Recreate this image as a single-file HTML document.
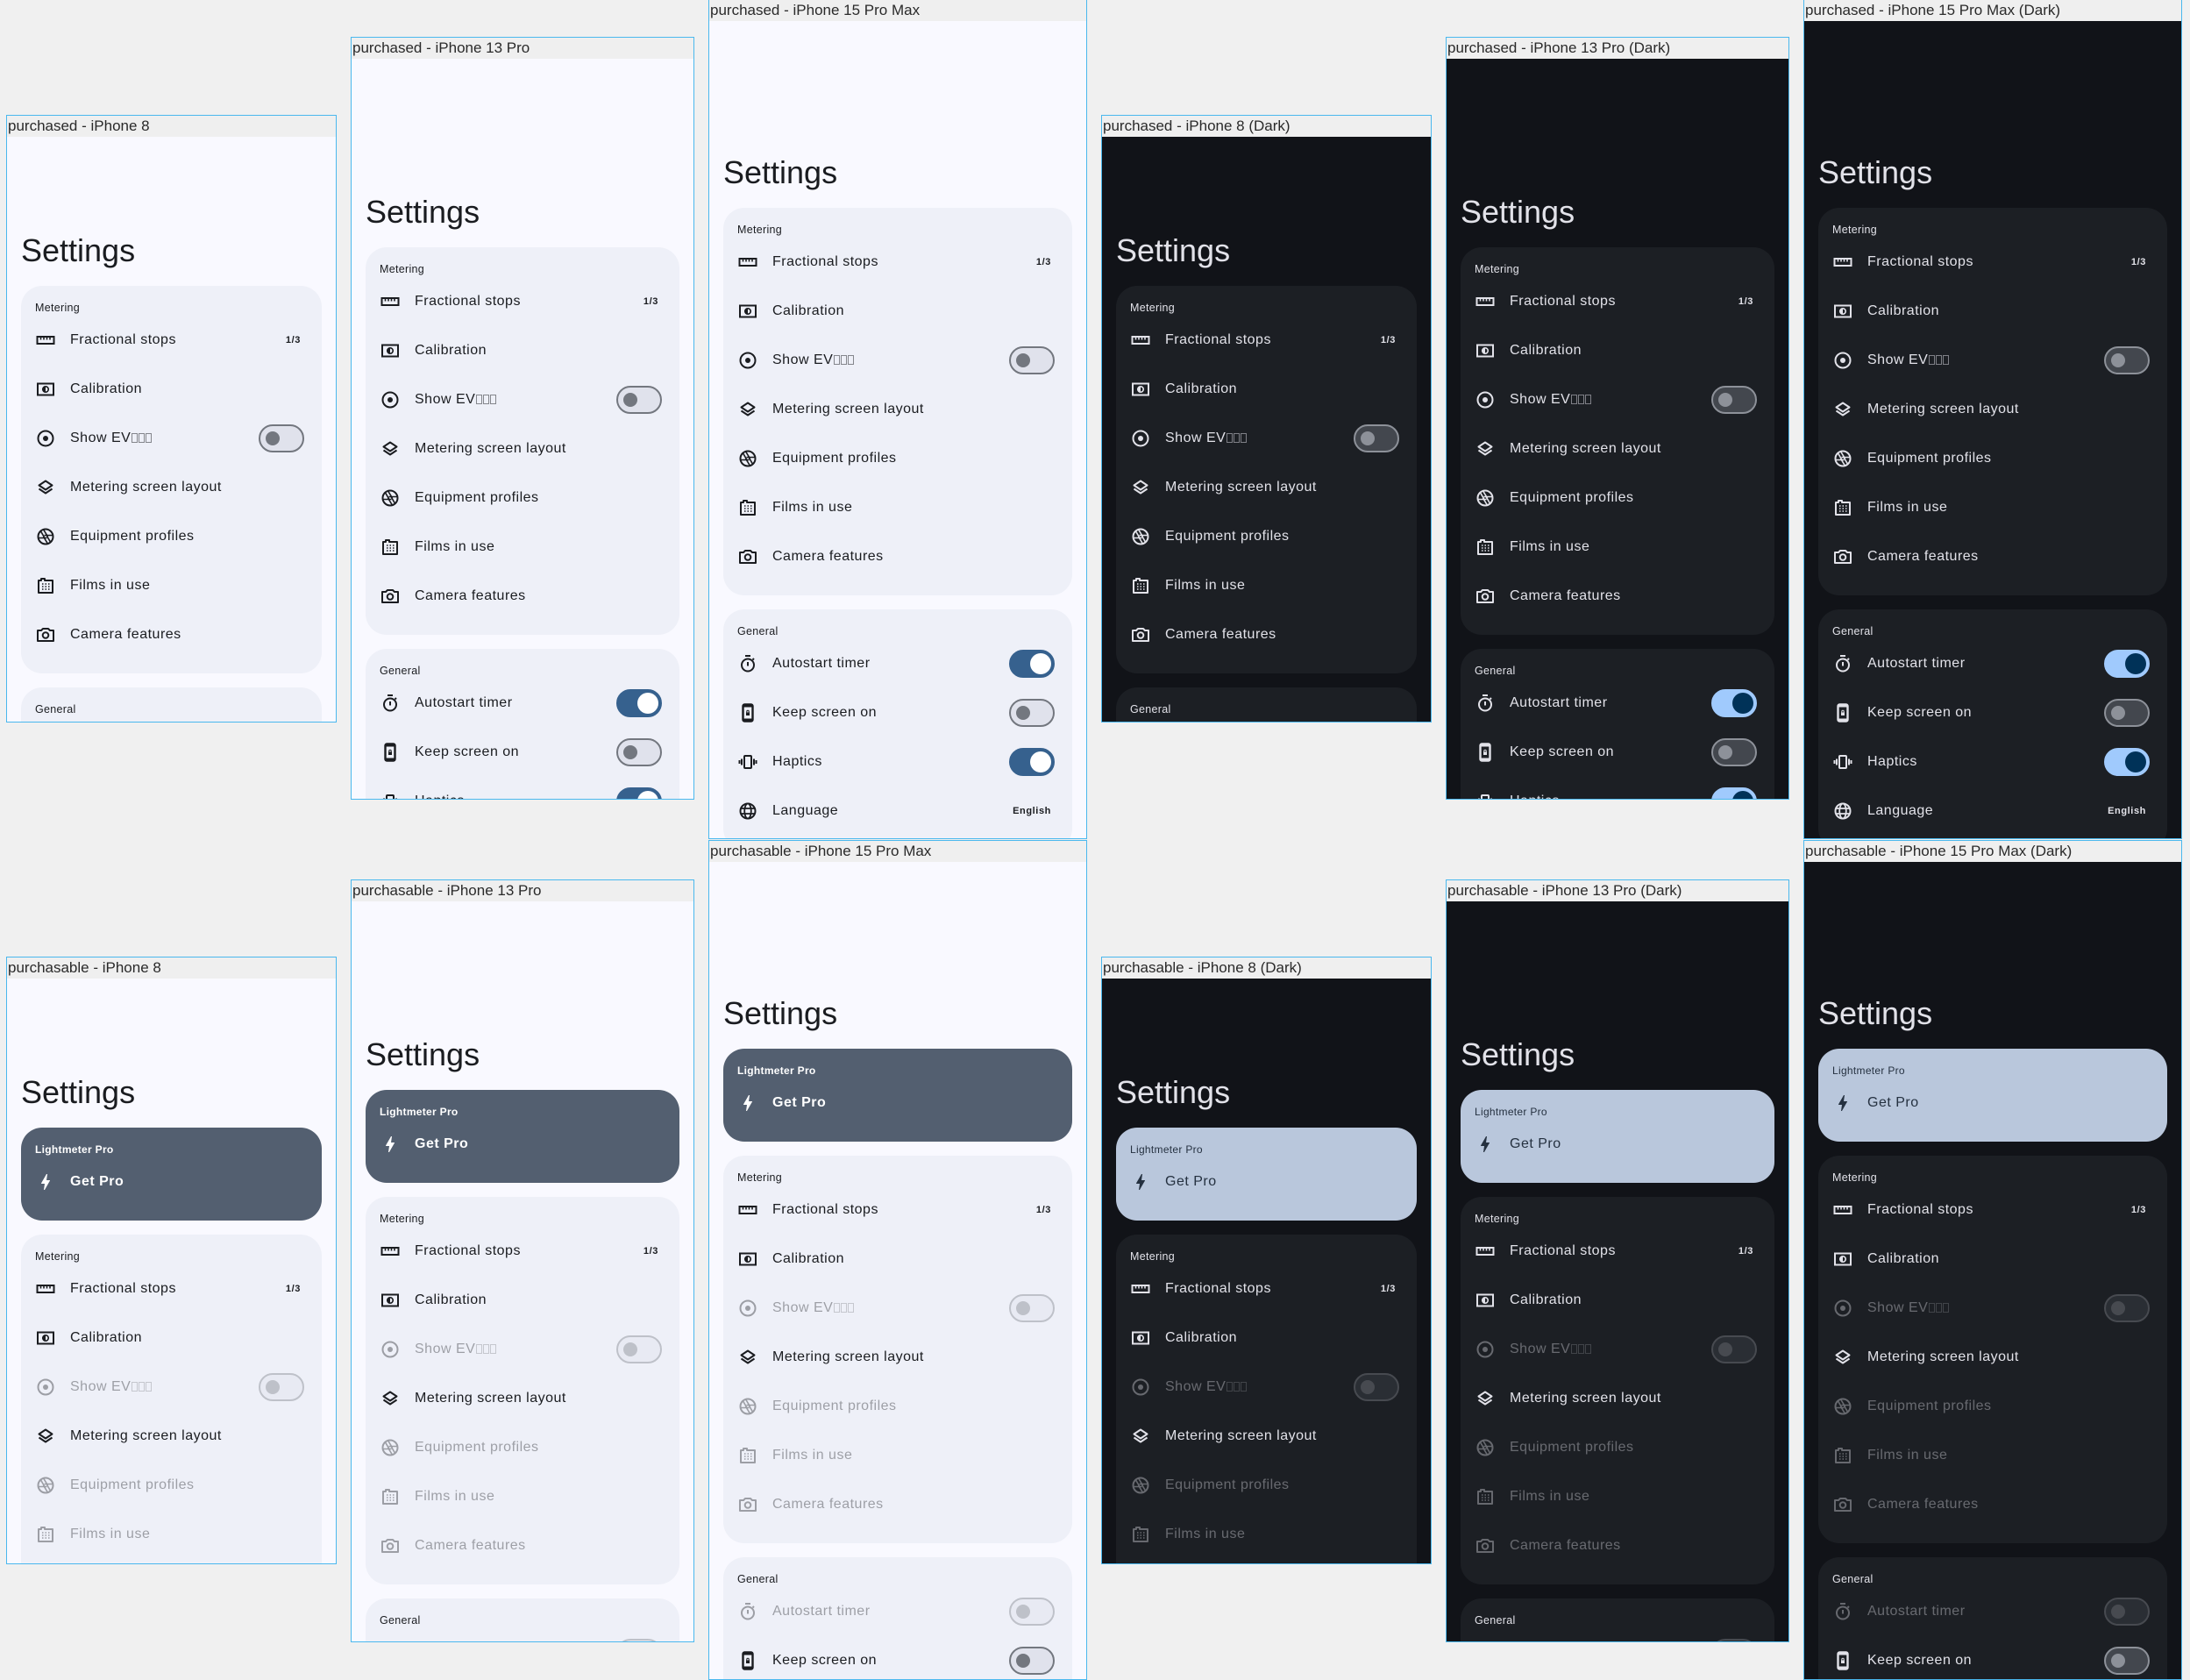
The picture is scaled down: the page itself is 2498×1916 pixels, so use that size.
<!DOCTYPE html>
<html><head><meta charset="utf-8">
<style>
body{margin:0;width:2498px;height:1916px;background:#f0f0f0;position:relative;overflow:hidden;font-family:"Liberation Sans",sans-serif}
.f{position:absolute;outline:1px solid #4ab8ee}
.h{height:24px;background:#efefef;color:#2a2a2a;font-size:17px;line-height:23px;white-space:nowrap;overflow:hidden;padding-left:1px}
.s{position:relative;overflow:hidden;background:#f9f9ff;color:#1a1c20}
.s.d{background:#111318;color:#e2e2e9}
.w8{width:375px}.w8 .s{height:667px}.w8 .ti{margin-top:108px}
.w13{width:390px}.w13 .s{height:844px}.w13 .ti{margin-top:153px}
.w15{width:430px}.w15 .s{height:932px}.w15 .ti{margin-top:151px}
.ti{font-size:36px;line-height:44px;height:44px;padding-left:16px;margin-bottom:18px}
.c{margin:0 16px 16px;border-radius:24px;background:#eef0f8;padding:17px 0 16px}
.d .c{background:#1c1f24}
.l{font-size:12.5px;line-height:17px;padding-left:16px;letter-spacing:.3px}
.r{height:56px;display:flex;align-items:center;padding:0 24px 0 16px;font-size:16px;letter-spacing:.5px;white-space:nowrap}
.r svg{width:24px;height:24px;margin-right:16px;flex:none}
.r span{flex:1}
.r b{font-size:11px;font-weight:bold;letter-spacing:.6px}
.r.x{opacity:.38}
.pc{background:#535f70;color:#fff}
.pc .l{font-weight:bold;font-size:12px}
.pc .r{font-weight:bold}
.d .pc{background:#b9c7dc;color:#253140}
.d .pc .l,.d .pc .r{font-weight:normal}
.sw{width:52px;height:32px;border-radius:16px;box-sizing:border-box;border:2px solid #73777f;background:#e0e2ec;position:relative;flex:none;margin-right:-4px}
.sw:after{content:"";position:absolute;left:6px;top:6px;width:16px;height:16px;border-radius:50%;background:#73777f}
.sw.on{background:#36618e;border-color:#36618e}
.sw.on:after{left:auto;right:2px;top:2px;width:24px;height:24px;background:#fff}
.d .sw{background:#43474e;border-color:#8d9199}.d .sw:after{background:#8d9199}
.d .sw.on{background:#a0cafd;border-color:#a0cafd}.d .sw.on:after{background:#003258}
i{display:inline-block;width:5px;height:9px;border:1px solid currentColor;opacity:.5;margin-left:1px;vertical-align:-1px}
</style></head><body>
<svg width="0" height="0" style="position:absolute">
<defs>
<symbol id="ru" viewBox="0 0 24 24"><path d="M2.5 8h19v8h-19z" fill="none" stroke="currentColor" stroke-width="2"/><path d="M6.5 8v3.5M10 8v3.5M13.5 8v3.5M17 8v3.5" stroke="currentColor" stroke-width="1.6"/></symbol>
<symbol id="ca" viewBox="0 0 24 24"><path d="M3 5.5h18v13H3z" fill="none" stroke="currentColor" stroke-width="2"/><circle cx="12" cy="12" r="3.2" fill="none" stroke="currentColor" stroke-width="1.6"/><path d="M12 8.8a3.2 3.2 0 0 0 0 6.4z" fill="currentColor"/><path d="M8 12h1M15 12h1" stroke="currentColor" stroke-width="1.5"/></symbol>
<symbol id="ev" viewBox="0 0 24 24"><circle cx="12" cy="12" r="8.5" fill="none" stroke="currentColor" stroke-width="2"/><circle cx="12" cy="12" r="3" fill="currentColor"/></symbol>
<symbol id="la" viewBox="0 0 24 24"><path d="M12 4.5l7.5 5-7.5 5-7.5-5z" fill="none" stroke="currentColor" stroke-width="2" stroke-linejoin="round"/><path d="M4.5 13.5l7.5 5 7.5-5" fill="none" stroke="currentColor" stroke-width="2" stroke-linejoin="round"/></symbol>
<symbol id="ap" viewBox="0 0 24 24"><circle cx="12" cy="12" r="8.5" fill="none" stroke="currentColor" stroke-width="2"/><path d="M9.5 3.8L14.5 12M20 10.5H10.5M17.5 18.2L12.5 9.5M14.5 20.2L9.5 12M4 13.5h9.5M6.5 5.8l5 8.7" stroke="currentColor" stroke-width="1.6" fill="none"/></symbol>
<symbol id="fi" viewBox="0 0 24 24"><path d="M4 6h3V4h4v2h9v14H4z" fill="none" stroke="currentColor" stroke-width="2" stroke-linejoin="round"/><path d="M8 10h1.5M11.5 10H13M15 10h1.5M8 13h1.5M11.5 13H13M15 13h1.5M8 16h1.5M11.5 16H13M15 16h1.5" stroke="currentColor" stroke-width="1.5"/></symbol>
<symbol id="cm" viewBox="0 0 24 24"><path d="M3 7h4l2-2h6l2 2h4v12H3z" fill="none" stroke="currentColor" stroke-width="2" stroke-linejoin="round"/><circle cx="12" cy="12.5" r="3.3" fill="none" stroke="currentColor" stroke-width="2"/></symbol>
<symbol id="tm" viewBox="0 0 24 24"><circle cx="12" cy="13.5" r="7" fill="none" stroke="currentColor" stroke-width="2"/><path d="M9 3h6M12 10v4.5M17.5 7.5l1.5-1.5" stroke="currentColor" stroke-width="2" fill="none"/></symbol>
<symbol id="ph" viewBox="0 0 24 24"><rect x="6.5" y="2.5" width="11" height="19" rx="1.8" fill="none" stroke="currentColor" stroke-width="2.4"/><path d="M7 4.5h10M7 19.5h10" stroke="currentColor" stroke-width="2"/><rect x="10" y="11.5" width="4" height="3.5" fill="currentColor"/><path d="M10.8 11.5v-1a1.2 1.2 0 0 1 2.4 0v1" fill="none" stroke="currentColor" stroke-width="1"/></symbol>
<symbol id="hp" viewBox="0 0 24 24"><rect x="8" y="5" width="8" height="14" rx="1" fill="none" stroke="currentColor" stroke-width="2"/><path d="M5 8.5v7M2.5 10v4M19 8.5v7M21.5 10v4" stroke="currentColor" stroke-width="2"/></symbol>
<symbol id="gl" viewBox="0 0 24 24"><circle cx="12" cy="12" r="8.5" fill="none" stroke="currentColor" stroke-width="2"/><ellipse cx="12" cy="12" rx="3.8" ry="8.5" fill="none" stroke="currentColor" stroke-width="1.8"/><path d="M3.5 9h17M3.5 15h17" stroke="currentColor" stroke-width="1.8"/></symbol>
<symbol id="bo" viewBox="0 0 24 24"><path d="M11 21h-1l1-7H7.5c-.88 0-.33-.75-.31-.78C8.48 10.94 10.42 7.54 13.01 3h1l-1 7h3.51c.4 0 .62.19.4.66C12.97 17.55 11 21 11 21z" fill="currentColor"/></symbol>
</defs></svg>

<!-- ROW 1: purchased -->
<div class="f w8" style="left:8px;top:132px"><div class="h">purchased - iPhone 8</div><div class="s">
<div class="ti">Settings</div>
<div class="c"><div class="l">Metering</div>
<div class="r"><svg><use href="#ru"/></svg><span>Fractional stops</span><b>1/3</b></div>
<div class="r"><svg><use href="#ca"/></svg><span>Calibration</span></div>
<div class="r"><svg><use href="#ev"/></svg><span>Show EV<i></i><i></i><i></i></span><em class="sw"></em></div>
<div class="r"><svg><use href="#la"/></svg><span>Metering screen layout</span></div>
<div class="r"><svg><use href="#ap"/></svg><span>Equipment profiles</span></div>
<div class="r"><svg><use href="#fi"/></svg><span>Films in use</span></div>
<div class="r"><svg><use href="#cm"/></svg><span>Camera features</span></div></div>
<div class="c"><div class="l">General</div>
<div class="r"><svg><use href="#tm"/></svg><span>Autostart timer</span><em class="sw on"></em></div>
<div class="r"><svg><use href="#ph"/></svg><span>Keep screen on</span><em class="sw"></em></div>
<div class="r"><svg><use href="#hp"/></svg><span>Haptics</span><em class="sw on"></em></div>
<div class="r"><svg><use href="#gl"/></svg><span>Language</span><b>English</b></div></div>
</div></div>

<div class="f w13" style="left:401px;top:43px"><div class="h">purchased - iPhone 13 Pro</div><div class="s">
<div class="ti">Settings</div>
<div class="c"><div class="l">Metering</div>
<div class="r"><svg><use href="#ru"/></svg><span>Fractional stops</span><b>1/3</b></div>
<div class="r"><svg><use href="#ca"/></svg><span>Calibration</span></div>
<div class="r"><svg><use href="#ev"/></svg><span>Show EV<i></i><i></i><i></i></span><em class="sw"></em></div>
<div class="r"><svg><use href="#la"/></svg><span>Metering screen layout</span></div>
<div class="r"><svg><use href="#ap"/></svg><span>Equipment profiles</span></div>
<div class="r"><svg><use href="#fi"/></svg><span>Films in use</span></div>
<div class="r"><svg><use href="#cm"/></svg><span>Camera features</span></div></div>
<div class="c"><div class="l">General</div>
<div class="r"><svg><use href="#tm"/></svg><span>Autostart timer</span><em class="sw on"></em></div>
<div class="r"><svg><use href="#ph"/></svg><span>Keep screen on</span><em class="sw"></em></div>
<div class="r"><svg><use href="#hp"/></svg><span>Haptics</span><em class="sw on"></em></div>
<div class="r"><svg><use href="#gl"/></svg><span>Language</span><b>English</b></div></div>
</div></div>

<div class="f w15" style="left:809px;top:0px"><div class="h">purchased - iPhone 15 Pro Max</div><div class="s">
<div class="ti">Settings</div>
<div class="c"><div class="l">Metering</div>
<div class="r"><svg><use href="#ru"/></svg><span>Fractional stops</span><b>1/3</b></div>
<div class="r"><svg><use href="#ca"/></svg><span>Calibration</span></div>
<div class="r"><svg><use href="#ev"/></svg><span>Show EV<i></i><i></i><i></i></span><em class="sw"></em></div>
<div class="r"><svg><use href="#la"/></svg><span>Metering screen layout</span></div>
<div class="r"><svg><use href="#ap"/></svg><span>Equipment profiles</span></div>
<div class="r"><svg><use href="#fi"/></svg><span>Films in use</span></div>
<div class="r"><svg><use href="#cm"/></svg><span>Camera features</span></div></div>
<div class="c"><div class="l">General</div>
<div class="r"><svg><use href="#tm"/></svg><span>Autostart timer</span><em class="sw on"></em></div>
<div class="r"><svg><use href="#ph"/></svg><span>Keep screen on</span><em class="sw"></em></div>
<div class="r"><svg><use href="#hp"/></svg><span>Haptics</span><em class="sw on"></em></div>
<div class="r"><svg><use href="#gl"/></svg><span>Language</span><b>English</b></div></div>
</div></div>

<div class="f w8" style="left:1257px;top:132px"><div class="h">purchased - iPhone 8 (Dark)</div><div class="s d">
<div class="ti">Settings</div>
<div class="c"><div class="l">Metering</div>
<div class="r"><svg><use href="#ru"/></svg><span>Fractional stops</span><b>1/3</b></div>
<div class="r"><svg><use href="#ca"/></svg><span>Calibration</span></div>
<div class="r"><svg><use href="#ev"/></svg><span>Show EV<i></i><i></i><i></i></span><em class="sw"></em></div>
<div class="r"><svg><use href="#la"/></svg><span>Metering screen layout</span></div>
<div class="r"><svg><use href="#ap"/></svg><span>Equipment profiles</span></div>
<div class="r"><svg><use href="#fi"/></svg><span>Films in use</span></div>
<div class="r"><svg><use href="#cm"/></svg><span>Camera features</span></div></div>
<div class="c"><div class="l">General</div>
<div class="r"><svg><use href="#tm"/></svg><span>Autostart timer</span><em class="sw on"></em></div>
<div class="r"><svg><use href="#ph"/></svg><span>Keep screen on</span><em class="sw"></em></div>
<div class="r"><svg><use href="#hp"/></svg><span>Haptics</span><em class="sw on"></em></div>
<div class="r"><svg><use href="#gl"/></svg><span>Language</span><b>English</b></div></div>
</div></div>

<div class="f w13" style="left:1650px;top:43px"><div class="h">purchased - iPhone 13 Pro (Dark)</div><div class="s d">
<div class="ti">Settings</div>
<div class="c"><div class="l">Metering</div>
<div class="r"><svg><use href="#ru"/></svg><span>Fractional stops</span><b>1/3</b></div>
<div class="r"><svg><use href="#ca"/></svg><span>Calibration</span></div>
<div class="r"><svg><use href="#ev"/></svg><span>Show EV<i></i><i></i><i></i></span><em class="sw"></em></div>
<div class="r"><svg><use href="#la"/></svg><span>Metering screen layout</span></div>
<div class="r"><svg><use href="#ap"/></svg><span>Equipment profiles</span></div>
<div class="r"><svg><use href="#fi"/></svg><span>Films in use</span></div>
<div class="r"><svg><use href="#cm"/></svg><span>Camera features</span></div></div>
<div class="c"><div class="l">General</div>
<div class="r"><svg><use href="#tm"/></svg><span>Autostart timer</span><em class="sw on"></em></div>
<div class="r"><svg><use href="#ph"/></svg><span>Keep screen on</span><em class="sw"></em></div>
<div class="r"><svg><use href="#hp"/></svg><span>Haptics</span><em class="sw on"></em></div>
<div class="r"><svg><use href="#gl"/></svg><span>Language</span><b>English</b></div></div>
</div></div>

<div class="f w15" style="left:2058px;top:0px"><div class="h">purchased - iPhone 15 Pro Max (Dark)</div><div class="s d">
<div class="ti">Settings</div>
<div class="c"><div class="l">Metering</div>
<div class="r"><svg><use href="#ru"/></svg><span>Fractional stops</span><b>1/3</b></div>
<div class="r"><svg><use href="#ca"/></svg><span>Calibration</span></div>
<div class="r"><svg><use href="#ev"/></svg><span>Show EV<i></i><i></i><i></i></span><em class="sw"></em></div>
<div class="r"><svg><use href="#la"/></svg><span>Metering screen layout</span></div>
<div class="r"><svg><use href="#ap"/></svg><span>Equipment profiles</span></div>
<div class="r"><svg><use href="#fi"/></svg><span>Films in use</span></div>
<div class="r"><svg><use href="#cm"/></svg><span>Camera features</span></div></div>
<div class="c"><div class="l">General</div>
<div class="r"><svg><use href="#tm"/></svg><span>Autostart timer</span><em class="sw on"></em></div>
<div class="r"><svg><use href="#ph"/></svg><span>Keep screen on</span><em class="sw"></em></div>
<div class="r"><svg><use href="#hp"/></svg><span>Haptics</span><em class="sw on"></em></div>
<div class="r"><svg><use href="#gl"/></svg><span>Language</span><b>English</b></div></div>
</div></div>

<!-- ROW 2: purchasable -->
<div class="f w8" style="left:8px;top:1092px"><div class="h">purchasable - iPhone 8</div><div class="s">
<div class="ti">Settings</div>
<div class="c pc"><div class="l">Lightmeter Pro</div><div class="r"><svg><use href="#bo"/></svg><span>Get Pro</span></div></div>
<div class="c"><div class="l">Metering</div>
<div class="r"><svg><use href="#ru"/></svg><span>Fractional stops</span><b>1/3</b></div>
<div class="r"><svg><use href="#ca"/></svg><span>Calibration</span></div>
<div class="r x"><svg><use href="#ev"/></svg><span>Show EV<i></i><i></i><i></i></span><em class="sw"></em></div>
<div class="r"><svg><use href="#la"/></svg><span>Metering screen layout</span></div>
<div class="r x"><svg><use href="#ap"/></svg><span>Equipment profiles</span></div>
<div class="r x"><svg><use href="#fi"/></svg><span>Films in use</span></div>
<div class="r x"><svg><use href="#cm"/></svg><span>Camera features</span></div></div>
<div class="c"><div class="l">General</div>
<div class="r x"><svg><use href="#tm"/></svg><span>Autostart timer</span><em class="sw"></em></div>
<div class="r"><svg><use href="#ph"/></svg><span>Keep screen on</span><em class="sw"></em></div></div>
</div></div>

<div class="f w13" style="left:401px;top:1004px"><div class="h">purchasable - iPhone 13 Pro</div><div class="s">
<div class="ti">Settings</div>
<div class="c pc"><div class="l">Lightmeter Pro</div><div class="r"><svg><use href="#bo"/></svg><span>Get Pro</span></div></div>
<div class="c"><div class="l">Metering</div>
<div class="r"><svg><use href="#ru"/></svg><span>Fractional stops</span><b>1/3</b></div>
<div class="r"><svg><use href="#ca"/></svg><span>Calibration</span></div>
<div class="r x"><svg><use href="#ev"/></svg><span>Show EV<i></i><i></i><i></i></span><em class="sw"></em></div>
<div class="r"><svg><use href="#la"/></svg><span>Metering screen layout</span></div>
<div class="r x"><svg><use href="#ap"/></svg><span>Equipment profiles</span></div>
<div class="r x"><svg><use href="#fi"/></svg><span>Films in use</span></div>
<div class="r x"><svg><use href="#cm"/></svg><span>Camera features</span></div></div>
<div class="c"><div class="l">General</div>
<div class="r x"><svg><use href="#tm"/></svg><span>Autostart timer</span><em class="sw"></em></div>
<div class="r"><svg><use href="#ph"/></svg><span>Keep screen on</span><em class="sw"></em></div></div>
</div></div>

<div class="f w15" style="left:809px;top:959px"><div class="h">purchasable - iPhone 15 Pro Max</div><div class="s">
<div class="ti">Settings</div>
<div class="c pc"><div class="l">Lightmeter Pro</div><div class="r"><svg><use href="#bo"/></svg><span>Get Pro</span></div></div>
<div class="c"><div class="l">Metering</div>
<div class="r"><svg><use href="#ru"/></svg><span>Fractional stops</span><b>1/3</b></div>
<div class="r"><svg><use href="#ca"/></svg><span>Calibration</span></div>
<div class="r x"><svg><use href="#ev"/></svg><span>Show EV<i></i><i></i><i></i></span><em class="sw"></em></div>
<div class="r"><svg><use href="#la"/></svg><span>Metering screen layout</span></div>
<div class="r x"><svg><use href="#ap"/></svg><span>Equipment profiles</span></div>
<div class="r x"><svg><use href="#fi"/></svg><span>Films in use</span></div>
<div class="r x"><svg><use href="#cm"/></svg><span>Camera features</span></div></div>
<div class="c"><div class="l">General</div>
<div class="r x"><svg><use href="#tm"/></svg><span>Autostart timer</span><em class="sw"></em></div>
<div class="r"><svg><use href="#ph"/></svg><span>Keep screen on</span><em class="sw"></em></div></div>
</div></div>

<div class="f w8" style="left:1257px;top:1092px"><div class="h">purchasable - iPhone 8 (Dark)</div><div class="s d">
<div class="ti">Settings</div>
<div class="c pc"><div class="l">Lightmeter Pro</div><div class="r"><svg><use href="#bo"/></svg><span>Get Pro</span></div></div>
<div class="c"><div class="l">Metering</div>
<div class="r"><svg><use href="#ru"/></svg><span>Fractional stops</span><b>1/3</b></div>
<div class="r"><svg><use href="#ca"/></svg><span>Calibration</span></div>
<div class="r x"><svg><use href="#ev"/></svg><span>Show EV<i></i><i></i><i></i></span><em class="sw"></em></div>
<div class="r"><svg><use href="#la"/></svg><span>Metering screen layout</span></div>
<div class="r x"><svg><use href="#ap"/></svg><span>Equipment profiles</span></div>
<div class="r x"><svg><use href="#fi"/></svg><span>Films in use</span></div>
<div class="r x"><svg><use href="#cm"/></svg><span>Camera features</span></div></div>
<div class="c"><div class="l">General</div>
<div class="r x"><svg><use href="#tm"/></svg><span>Autostart timer</span><em class="sw"></em></div>
<div class="r"><svg><use href="#ph"/></svg><span>Keep screen on</span><em class="sw"></em></div></div>
</div></div>

<div class="f w13" style="left:1650px;top:1004px"><div class="h">purchasable - iPhone 13 Pro (Dark)</div><div class="s d">
<div class="ti">Settings</div>
<div class="c pc"><div class="l">Lightmeter Pro</div><div class="r"><svg><use href="#bo"/></svg><span>Get Pro</span></div></div>
<div class="c"><div class="l">Metering</div>
<div class="r"><svg><use href="#ru"/></svg><span>Fractional stops</span><b>1/3</b></div>
<div class="r"><svg><use href="#ca"/></svg><span>Calibration</span></div>
<div class="r x"><svg><use href="#ev"/></svg><span>Show EV<i></i><i></i><i></i></span><em class="sw"></em></div>
<div class="r"><svg><use href="#la"/></svg><span>Metering screen layout</span></div>
<div class="r x"><svg><use href="#ap"/></svg><span>Equipment profiles</span></div>
<div class="r x"><svg><use href="#fi"/></svg><span>Films in use</span></div>
<div class="r x"><svg><use href="#cm"/></svg><span>Camera features</span></div></div>
<div class="c"><div class="l">General</div>
<div class="r x"><svg><use href="#tm"/></svg><span>Autostart timer</span><em class="sw"></em></div>
<div class="r"><svg><use href="#ph"/></svg><span>Keep screen on</span><em class="sw"></em></div></div>
</div></div>

<div class="f w15" style="left:2058px;top:959px"><div class="h">purchasable - iPhone 15 Pro Max (Dark)</div><div class="s d">
<div class="ti">Settings</div>
<div class="c pc"><div class="l">Lightmeter Pro</div><div class="r"><svg><use href="#bo"/></svg><span>Get Pro</span></div></div>
<div class="c"><div class="l">Metering</div>
<div class="r"><svg><use href="#ru"/></svg><span>Fractional stops</span><b>1/3</b></div>
<div class="r"><svg><use href="#ca"/></svg><span>Calibration</span></div>
<div class="r x"><svg><use href="#ev"/></svg><span>Show EV<i></i><i></i><i></i></span><em class="sw"></em></div>
<div class="r"><svg><use href="#la"/></svg><span>Metering screen layout</span></div>
<div class="r x"><svg><use href="#ap"/></svg><span>Equipment profiles</span></div>
<div class="r x"><svg><use href="#fi"/></svg><span>Films in use</span></div>
<div class="r x"><svg><use href="#cm"/></svg><span>Camera features</span></div></div>
<div class="c"><div class="l">General</div>
<div class="r x"><svg><use href="#tm"/></svg><span>Autostart timer</span><em class="sw"></em></div>
<div class="r"><svg><use href="#ph"/></svg><span>Keep screen on</span><em class="sw"></em></div></div>
</div></div>
</body></html>
